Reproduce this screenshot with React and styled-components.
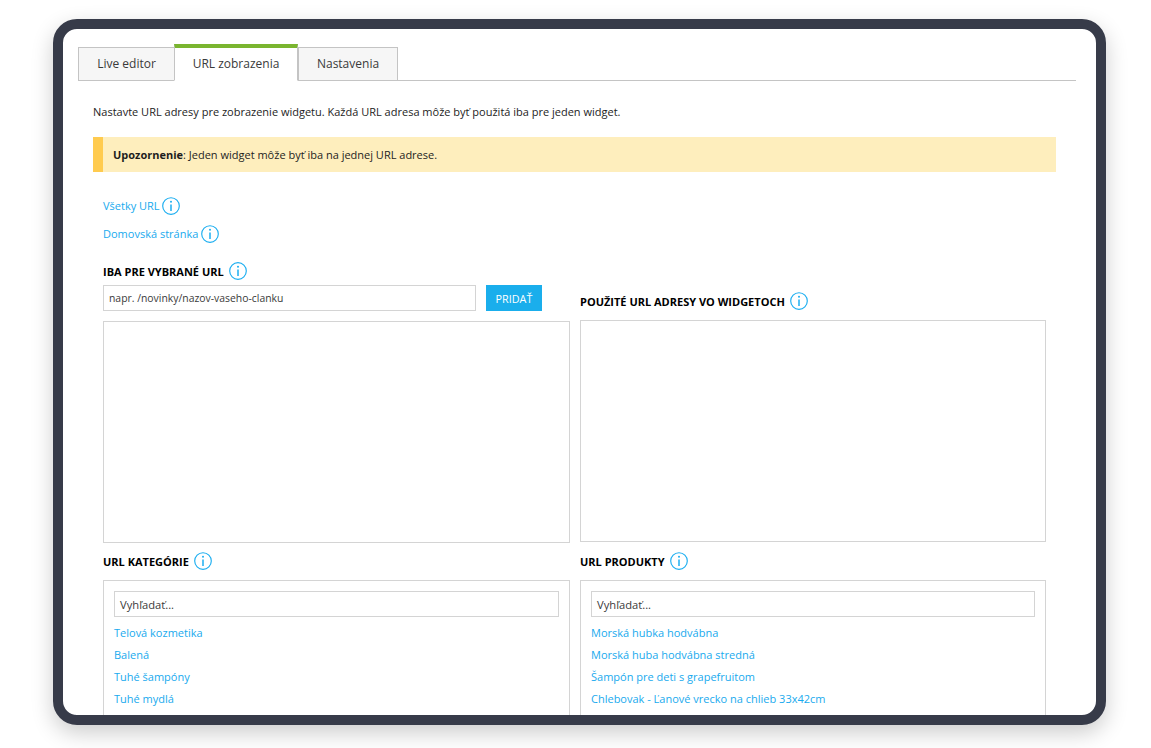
import React from "react";
import styled, { createGlobalStyle } from "styled-components";

const Global = createGlobalStyle`
  html, body { margin: 0; padding: 0; background: #fff; }
  body { font-family: "Open Sans", "Liberation Sans", sans-serif; font-size: 11px; color: #222; }
  * { box-sizing: border-box; }
`;

const Page = styled.div`
  width: 1151px;
  height: 748px;
  padding: 19px 45px 23px 53px;
  overflow: hidden;
`;

const Frame = styled.div`
  width: 1053px;
  height: 706px;
  border: 10px solid #373b49;
  border-radius: 24px;
  background: #fff;
  overflow: hidden;
  padding: 15px 20px 0 15px;
  box-shadow: 0 8px 22px rgba(0, 0, 0, 0.2);
`;

const Tabs = styled.div`
  display: flex;
  align-items: flex-end;
  height: 37px;
  border-bottom: 1px solid #c4c4c4;
`;

const Tab = styled.div`
  height: ${(p) => (p.$active ? "37px" : "34px")};
  width: ${(p) => p.$w}px;
  margin-left: ${(p) => (p.$active ? "-1px" : "0")};
  margin-bottom: -1px;
  padding-bottom: 2px;
  display: flex;
  align-items: center;
  justify-content: center;
  font-size: 12px;
  color: #3a3a3a;
  background: ${(p) => (p.$active ? "#fff" : "#f6f6f6")};
  border: 1px solid #c4c4c4;
  border-top: ${(p) => (p.$active ? "4px solid #7ab52f" : "1px solid #c4c4c4")};
  border-bottom: ${(p) => (p.$active ? "1px solid #fff" : "1px solid #c4c4c4")};
`;

const Content = styled.div`
  padding: 22px 20px 0 15px;
`;

const Intro = styled.p`
  margin: 0 0 17px;
  line-height: 17px;
  font-size: 11px;
  color: #1d1d1d;
`;

const Alert = styled.div`
  height: 35px;
  display: flex;
  align-items: center;
  padding-left: 10px;
  background: #feeebd;
  border-left: 10px solid #ffcb4f;
  font-size: 11px;
  color: #1d1d1d;
  b { font-weight: 700; }
`;

const Options = styled.div`
  display: flex;
  flex-direction: column;
  gap: 9px;
  padding: 24px 0 0 10px;
`;

const LinkRow = styled.div`
  display: flex;
  align-items: center;
  gap: 2.5px;
  height: 19px;
  color: #18aaee;
  font-size: 11px;
`;

const Columns = styled.div`
  display: grid;
  grid-template-columns: 467px 466px;
  column-gap: 10px;
  margin-left: 10px;
`;

const TopLeft = styled.div`
  padding-top: 18px;
`;

const TopRight = styled.div`
  display: flex;
  flex-direction: column;
  justify-content: flex-end;
  padding-bottom: 1px;
`;

const Heading = styled.div`
  display: flex;
  align-items: center;
  gap: 5px;
  height: 20px;
  font-size: 11px;
  font-weight: 700;
  color: #000;
  text-transform: uppercase;
`;

const RightHeading = styled(Heading)`
  margin-bottom: 9px;
`;

const SectionHeading = styled(Heading)`
  margin: 8px 0 9px;
`;

const UrlRow = styled.div`
  display: flex;
  gap: 10px;
  margin: 4px 0 10px;
`;

const Field = styled.div`
  height: 26px;
  flex: ${(p) => (p.$fixed ? "0 0 373px" : "1")};
  display: flex;
  align-items: center;
  padding-left: 5px;
  border: 1px solid #d4d4d4;
  background: #fff;
  color: #3a3a3a;
  font-size: ${(p) => (p.$fixed ? "10.4px" : "11.2px")};
`;

const AddButton = styled.div`
  width: 56px;
  height: 26px;
  display: flex;
  align-items: center;
  justify-content: center;
  background: #1aaeec;
  color: #fff;
  font-size: 10.8px;
  font-weight: 500;
`;

const EmptyBox = styled.div`
  height: 222px;
  border: 1px solid #d4d4d4;
`;

const ListBox = styled.div`
  height: 160px;
  border: 1px solid #d4d4d4;
  padding: 10px 10px 0;
`;

const Links = styled.div`
  margin-top: 5px;
`;

const ListLink = styled.div`
  height: 22px;
  line-height: 22px;
  color: #18aaee;
  font-size: 11px;
  white-space: nowrap;
`;

const Info = () => (
  <svg width="18" height="18" viewBox="0 0 18 18" fill="none" stroke="#1caef0" style={{ flex: "none" }}>
    <circle cx="9" cy="9" r="8.3" strokeWidth="1.15" />
    <path d="M9 7.4V14" strokeWidth="1.5" />
    <circle cx="9" cy="4.8" r="1" fill="#1caef0" stroke="none" />
  </svg>
);

const categories = ["Telová kozmetika", "Balená", "Tuhé šampóny", "Tuhé mydlá"];
const products = [
  "Morská hubka hodvábna",
  "Morská huba hodvábna stredná",
  "Šampón pre deti s grapefruitom",
  "Chlebovak - Ľanové vrecko na chlieb 33x42cm",
];

const List = ({ items }) => (
  <ListBox>
    <Field>Vyhľadať...</Field>
    <Links>
      {items.map((t) => (
        <ListLink key={t}>{t}</ListLink>
      ))}
    </Links>
  </ListBox>
);

export default function App() {
  return (
    <Page>
      <Global />
      <Frame>
        <Tabs>
          <Tab $w={97}>Live editor</Tab>
          <Tab $active $w={124}>URL zobrazenia</Tab>
          <Tab $w={100}>Nastavenia</Tab>
        </Tabs>
        <Content>
          <Intro>Nastavte URL adresy pre zobrazenie widgetu. Každá URL adresa môže byť použitá iba pre jeden widget.</Intro>
          <Alert><span><b>Upozornenie</b>: Jeden widget môže byť iba na jednej URL adrese.</span></Alert>
          <Options>
            <LinkRow>Všetky URL <Info /></LinkRow>
            <LinkRow>Domovská stránka <Info /></LinkRow>
          </Options>
          <Columns>
            <TopLeft>
              <Heading>Iba pre vybrané URL <Info /></Heading>
              <UrlRow>
                <Field $fixed>napr. /novinky/nazov-vaseho-clanku</Field>
                <AddButton>PRIDAŤ</AddButton>
              </UrlRow>
              <EmptyBox />
            </TopLeft>
            <TopRight>
              <RightHeading>Použité URL adresy vo widgetoch <Info /></RightHeading>
              <EmptyBox />
            </TopRight>
            <div>
              <SectionHeading>URL kategórie <Info /></SectionHeading>
              <List items={categories} />
            </div>
            <div>
              <SectionHeading>URL produkty <Info /></SectionHeading>
              <List items={products} />
            </div>
          </Columns>
        </Content>
      </Frame>
    </Page>
  );
}
